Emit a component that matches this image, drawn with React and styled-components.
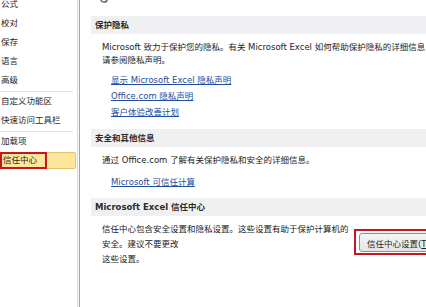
import React from "react";
import styled, { createGlobalStyle } from "styled-components";

const GlobalStyle = createGlobalStyle`
body {
    margin: 0;
    background: #ffffff;
    font-family: "DejaVu Sans", "Noto Sans CJK SC", sans-serif;
}
`

const navItems = [
    ["公式", "校对", "保存", "语言", "高级"],
    ["自定义功能区", "快速访问工具栏"],
    ["加载项"],
];

const App = () => {
    return (
        <>
            <GlobalStyle />
            <Window>
                <Sidebar>
                    <NavList>
                        {navItems.map((group, i) => (
                            <React.Fragment key={i}>
                                {i > 0 && <NavDivider />}
                                {group.map((label) => (
                                    <NavItem key={label}>{label}</NavItem>
                                ))}
                            </React.Fragment>
                        ))}
                        <NavItem selected>
                            <RedMark>信任中心</RedMark>
                        </NavItem>
                    </NavList>
                </Sidebar>
                <Main>
                    <TopIcon width="8" height="8" viewBox="0 0 8 8">
                        <circle cx="4" cy="4" r="3.2" fill="none" stroke="#555" strokeWidth="1.3" />
                    </TopIcon>

                    <SectionHeader top={13}>保护隐私</SectionHeader>
                    <Para top={7}>
                        Microsoft 致力于保护您的隐私。有关 Microsoft Excel 如何帮助保护隐私的详细信息，
                        <br />
                        请参阅隐私声明。
                    </Para>
                    <LinkList top={5}>
                        <Link href="#">显示 Microsoft Excel 隐私声明</Link>
                        <Link href="#">Office.com 隐私声明</Link>
                        <Link href="#">客户体验改善计划</Link>
                    </LinkList>

                    <SectionHeader top={9}>安全和其他信息</SectionHeader>
                    <Para top={7}>通过 Office.com 了解有关保护隐私和安全的详细信息。</Para>
                    <LinkList top={7}>
                        <Link href="#">Microsoft 可信任计算</Link>
                    </LinkList>

                    <SectionHeader top={8}>Microsoft Excel 信任中心</SectionHeader>
                    <TrustRow>
                        <TrustText>
                            信任中心包含安全设置和隐私设置。这些设置有助于保护计算机的
                            <br />
                            安全。建议不要更改
                            <br />
                            这些设置。
                        </TrustText>
                        <ButtonMark>
                            <SettingsButton>
                                信任中心设置(<u>T</u>)...
                            </SettingsButton>
                        </ButtonMark>
                    </TrustRow>
                </Main>
            </Window>
        </>
    );
};

const Window = styled.div`
display: flex;
width: 426px;
height: 307px;
overflow: hidden;
background: white;
color: #222;
font-size: 8.5px;
`

const Sidebar = styled.div`
width: 77px;
flex-shrink: 0;
border-right: 1px solid #d6d6d6;
`

const NavList = styled.div`
display: flex;
flex-direction: column;
margin-top: -5px;
`

const NavItem = styled.div`
height: 19px;
display: flex;
align-items: stretch;
padding-left: 1px;
line-height: 19px;
white-space: nowrap;
color: #1e1e1e;

${({ selected }) =>
    selected &&
    `
    box-sizing: border-box;
    background: #fde69c;
    border: 1px solid #e6c26c;
    border-left: none;
    border-radius: 0 2px 2px 0;
    margin-right: 1px;
    padding: 0;
    height: 17px;
    margin-top: 1px;
    line-height: 13px;
`}
`

const RedMark = styled.span`
display: block;
box-sizing: border-box;
width: 47px;
margin-top: -1px;
height: 17px;
border: 2px solid #c9161e;
padding-left: 1px;
line-height: 13px;
`

const NavDivider = styled.div`
height: 1px;
width: 73px;
margin-top: 1px;
background: #e2e2e2;
`

const Main = styled.div`
flex: 1;
min-width: 0;
margin-left: 1px;
border-left: 1px solid #a3a3a3;
padding-left: 11px;
display: flex;
flex-direction: column;
overflow: hidden;
`

const TopIcon = styled.svg`
display: block;
margin: -5px 0 0 9px;
flex-shrink: 0;
`

const SectionHeader = styled.div`
margin-top: ${({ top }) => top}px;
height: 18px;
line-height: 18px;
padding-left: 4px;
background: #f0f0f2;
font-weight: 700;
color: #2b2b2b;
white-space: nowrap;
flex-shrink: 0;
`

const Para = styled.div`
margin-top: ${({ top }) => top}px;
padding-left: 11px;
line-height: 13px;
white-space: nowrap;
`

const LinkList = styled.div`
margin-top: ${({ top }) => top}px;
padding-left: 20px;
display: flex;
flex-direction: column;
align-items: flex-start;
`

const Link = styled.a`
line-height: 16px;
color: #1f4d9c;
text-decoration: underline;
white-space: nowrap;
`

const TrustRow = styled.div`
margin-top: 6px;
padding-left: 11px;
display: flex;
align-items: flex-start;
`

const TrustText = styled.div`
width: 252px;
flex-shrink: 0;
line-height: 15px;
white-space: nowrap;
`

const ButtonMark = styled.div`
margin-top: 7px;
padding: 2px 0 1px 3px;
border: 2px solid #c9161e;
border-right: none;
flex-shrink: 0;
`

const SettingsButton = styled.button`
height: 19px;
padding: 0 8px 0 7px;
font-family: inherit;
font-size: 8.5px;
color: #1e1e1e;
white-space: nowrap;
background: linear-gradient(#f6f6f6, #e4e4e4);
border: 1px solid #8f8f8f;
border-radius: 3px;
`

export default App;
